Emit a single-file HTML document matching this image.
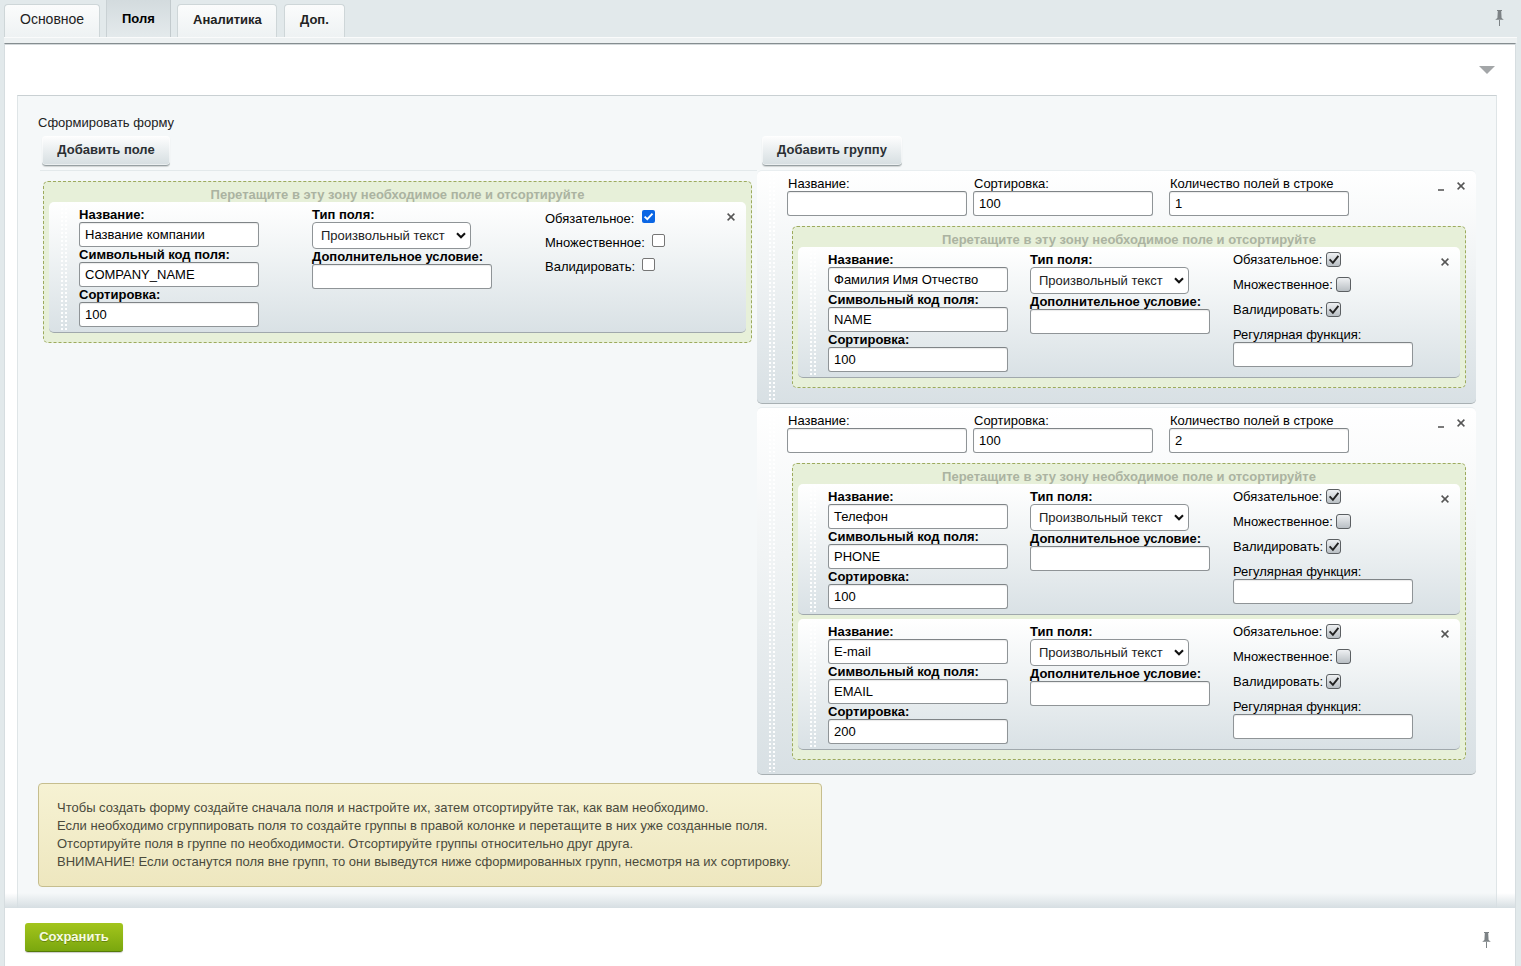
<!DOCTYPE html><html><head><meta charset="utf-8"><style>
*{margin:0;padding:0}
html,body{width:1521px;height:966px;overflow:hidden}
body{position:relative;background:#e2e9eb;font-family:"Liberation Sans",sans-serif;font-size:13px;color:#000}
.abs{position:absolute}
.t{position:absolute;white-space:nowrap;line-height:15px}
.inp{position:absolute;box-sizing:border-box;border:1px solid #8f9497;border-top-color:#7f8487;border-radius:3px;background:#fff;padding-left:5px;line-height:23px;white-space:nowrap;box-shadow:inset 0 1px 1px rgba(0,0,0,.08)}
.sel{position:absolute;box-sizing:border-box;height:27px;border:1px solid #8f9497;border-radius:4px;background:#fff;padding-left:8px;line-height:25px;white-space:nowrap;color:#222}
.card{position:absolute;box-sizing:border-box;border-radius:5px;background:linear-gradient(#fff,#f2f5f6 35%,#d9e1e5);border-bottom:1px solid #a0a8ac}
.gcard{position:absolute;box-sizing:border-box;border-radius:5px;background:linear-gradient(#fff,#f1f4f5 40%,#d8e0e4);border-bottom:1px solid #a8b0b3;border-top:1px solid #e9eef0}
.handle{position:absolute;width:6px;background-image:radial-gradient(circle at 1px 1px,rgba(255,255,255,.95) 1px,transparent 1.2px);background-size:4px 4px}
.dz{position:absolute;box-sizing:border-box;border:1px dashed #9daa5e;border-radius:5px;background:#e7f0d9}
.dzt{position:absolute;text-align:center;font-weight:bold;color:#abb3a1;line-height:15px;white-space:nowrap}
.cbx{width:15px;height:15px;box-sizing:border-box;border:1px solid #5b5f62;border-radius:3px;background:linear-gradient(#eef0f2,#b9bfc4)}
.btn{position:absolute;box-sizing:border-box;height:30px;border-radius:4px;background:linear-gradient(#fefefe,#e7ecee 55%,#d6dee1);border-bottom:1px solid #97a0a3;box-shadow:0 1px 1px rgba(0,0,0,.15),inset 0 0 0 1px rgba(255,255,255,.5);font-weight:bold;text-align:center;line-height:28px;color:#2a2f33}
.tab{position:absolute;top:4px;height:33px;box-sizing:border-box;border:1px solid #ced6d8;border-bottom:none;border-radius:4px 4px 0 0;background:linear-gradient(#fbfcfc,#eef2f3);font-weight:bold;color:#222}
</style></head><body>
<div class="tab" style="left:4px;width:96px;font-weight:normal"><div class="t" style="left:15px;top:6px;font-size:14px;line-height:16px">Основное</div></div>
<div class="abs" style="left:106px;top:0;width:65px;height:37px;box-sizing:border-box;border-left:1px solid #c9d1d4;border-right:1px solid #c2cacd;background:linear-gradient(#d3dbde,#e4eaec)"><div class="t" style="left:15px;top:11px;font-weight:bold">Поля</div></div>
<div class="tab" style="left:177px;width:100px"><div class="t" style="left:15px;top:7px">Аналитика</div></div>
<div class="tab" style="left:284px;width:61px"><div class="t" style="left:15px;top:7px">Доп.</div></div>
<svg class="abs" style="left:1494px;top:9px" width="11" height="18" viewBox="0 0 11 18"><path d="M3 1 H8 V2 H7.2 L7.6 9 L9.8 10.8 H1.2 L3.4 9 L3.8 2 H3 Z" fill="#7c8285"/><path d="M5.5 10.8 V17" stroke="#7c8285" stroke-width="1"/></svg>
<div class="abs" style="left:4px;top:37px;width:1513px;height:6px;background:#edf1f2;border-top:1px solid #fafbfb;box-sizing:border-box"></div>
<div class="abs" style="left:4px;top:43px;width:1512px;height:923px;background:#fff;box-sizing:border-box;border-left:1px solid #d6dde0;border-right:1px solid #d6dde0;border-top:1px solid #858d90"></div>
<div class="abs" style="left:5px;top:44px;width:1510px;height:1px;background:#d3d8da"></div>
<svg class="abs" style="left:1479px;top:66px" width="16" height="8" viewBox="0 0 16 8"><path d="M0 0 H16 L8 8 Z" fill="#a3a6a8"/></svg>
<div class="abs" style="left:17px;top:95px;width:1480px;height:813px;box-sizing:border-box;background:#f5f8f9;border-top:1px solid #c9d0d3;border-left:1px solid #dfe5e7;border-right:1px solid #dfe5e7"></div>
<div class="abs" style="left:5px;top:893px;width:1510px;height:15px;background:linear-gradient(rgba(218,226,229,0),rgba(214,222,226,1))"></div>
<div class="t" style="left:38px;top:115px;color:#222;">Сформировать форму</div>
<div class="btn" style="left:42px;top:136px;width:128px">Добавить поле</div>
<div class="btn" style="left:762px;top:136px;width:140px">Добавить группу</div>
<div class="abs" style="left:40px;top:170px;width:717px;height:1px;background:#e3e9eb"></div>
<div class="dz" style="left:43px;top:181px;width:709px;height:162px"></div>
<div class="dzt" style="left:43px;top:187px;width:709px">Перетащите в эту зону необходимое поле и отсортируйте</div>
<div class="card" style="left:49px;top:202px;width:697px;height:131px"></div>
<div class="handle" style="left:61px;top:204px;height:127px"></div>
<div class="t" style="left:79px;top:207px;font-weight:bold;">Название:</div>
<div class="inp" style="left:79px;top:222px;width:180px;height:25px">Название компании</div>
<div class="t" style="left:79px;top:247px;font-weight:bold;">Символьный код поля:</div>
<div class="inp" style="left:79px;top:262px;width:180px;height:25px">COMPANY_NAME</div>
<div class="t" style="left:79px;top:287px;font-weight:bold;">Сортировка:</div>
<div class="inp" style="left:79px;top:302px;width:180px;height:25px">100</div>
<div class="t" style="left:312px;top:207px;font-weight:bold;">Тип поля:</div>
<div class="sel" style="left:312px;top:222px;width:159px">Произвольный текст<svg width="10" height="7" viewBox="0 0 10 7" style="position:absolute;right:4px;top:9px"><path d="M1 1.2 L5 5.2 L9 1.2" fill="none" stroke="#111" stroke-width="2.1"/></svg></div>
<div class="t" style="left:312px;top:249px;font-weight:bold;">Дополнительное условие:</div>
<div class="inp" style="left:312px;top:264px;width:180px;height:25px"></div>
<div class="t" style="left:545px;top:211px;">Обязательное:</div>
<div class="abs" style="left:642px;top:210px;width:13px;height:13px;border-radius:2px;background:#0b66e4"><svg width="13" height="13" viewBox="0 0 13 13" style="position:absolute;left:0;top:0"><path d="M2.6 6.6 L5.3 9.2 L10.5 3.6" fill="none" stroke="#fff" stroke-width="1.9"/></svg></div>
<div class="t" style="left:545px;top:235px;">Множественное:</div>
<div class="abs" style="left:652px;top:234px;width:13px;height:13px;box-sizing:border-box;border:1px solid #767676;border-radius:2px;background:#fff"></div>
<div class="t" style="left:545px;top:259px;">Валидировать:</div>
<div class="abs" style="left:642px;top:258px;width:13px;height:13px;box-sizing:border-box;border:1px solid #767676;border-radius:2px;background:#fff"></div>
<svg class="abs" style="left:727px;top:213px" width="8" height="8" viewBox="0 0 8 8"><path d="M0.6 0.6 L7.4 7.4 M7.4 0.6 L0.6 7.4" stroke="#555" stroke-width="1.5"/></svg>
<div class="gcard" style="left:757px;top:170px;width:719px;height:234px"></div>
<div class="handle" style="left:769px;top:174px;height:227px"></div>
<div class="t" style="left:788px;top:176px;">Название:</div>
<div class="inp" style="left:787px;top:191px;width:180px;height:25px"></div>
<div class="t" style="left:974px;top:176px;">Сортировка:</div>
<div class="inp" style="left:973px;top:191px;width:180px;height:25px">100</div>
<div class="t" style="left:1170px;top:176px;">Количество полей в строке</div>
<div class="inp" style="left:1169px;top:191px;width:180px;height:25px">1</div>
<div class="abs" style="left:1438px;top:189px;width:6px;height:2px;background:#7a7a7a"></div>
<svg class="abs" style="left:1457px;top:182px" width="8" height="8" viewBox="0 0 8 8"><path d="M0.6 0.6 L7.4 7.4 M7.4 0.6 L0.6 7.4" stroke="#555" stroke-width="1.5"/></svg>
<div class="dz" style="left:792px;top:226px;width:674px;height:162px"></div>
<div class="dzt" style="left:792px;top:232px;width:674px">Перетащите в эту зону необходимое поле и отсортируйте</div>
<div class="card" style="left:798px;top:247px;width:662px;height:131px"></div>
<div class="handle" style="left:810px;top:249px;height:127px"></div>
<div class="t" style="left:828px;top:252px;font-weight:bold;">Название:</div>
<div class="inp" style="left:828px;top:267px;width:180px;height:25px">Фамилия Имя Отчество</div>
<div class="t" style="left:828px;top:292px;font-weight:bold;">Символьный код поля:</div>
<div class="inp" style="left:828px;top:307px;width:180px;height:25px">NAME</div>
<div class="t" style="left:828px;top:332px;font-weight:bold;">Сортировка:</div>
<div class="inp" style="left:828px;top:347px;width:180px;height:25px">100</div>
<div class="t" style="left:1030px;top:252px;font-weight:bold;">Тип поля:</div>
<div class="sel" style="left:1030px;top:267px;width:159px">Произвольный текст<svg width="10" height="7" viewBox="0 0 10 7" style="position:absolute;right:4px;top:9px"><path d="M1 1.2 L5 5.2 L9 1.2" fill="none" stroke="#111" stroke-width="2.1"/></svg></div>
<div class="t" style="left:1030px;top:294px;font-weight:bold;">Дополнительное условие:</div>
<div class="inp" style="left:1030px;top:309px;width:180px;height:25px"></div>
<div class="t" style="left:1233px;top:252px;">Обязательное:</div>
<div class="abs cbx" style="left:1326px;top:252px"><svg width="15" height="15" viewBox="0 0 15 15" style="position:absolute;left:-1px;top:-1px"><path d="M3.6 7.4 L6.9 10.8 L12.4 3.8" fill="none" stroke="#222" stroke-width="1.9"/></svg></div>
<div class="t" style="left:1233px;top:277px;">Множественное:</div>
<div class="abs cbx" style="left:1336px;top:277px"></div>
<div class="t" style="left:1233px;top:302px;">Валидировать:</div>
<div class="abs cbx" style="left:1326px;top:302px"><svg width="15" height="15" viewBox="0 0 15 15" style="position:absolute;left:-1px;top:-1px"><path d="M3.6 7.4 L6.9 10.8 L12.4 3.8" fill="none" stroke="#222" stroke-width="1.9"/></svg></div>
<div class="t" style="left:1233px;top:327px;">Регулярная функция:</div>
<div class="inp" style="left:1233px;top:342px;width:180px;height:25px"></div>
<svg class="abs" style="left:1441px;top:258px" width="8" height="8" viewBox="0 0 8 8"><path d="M0.6 0.6 L7.4 7.4 M7.4 0.6 L0.6 7.4" stroke="#555" stroke-width="1.5"/></svg>
<div class="gcard" style="left:757px;top:407px;width:719px;height:368px"></div>
<div class="handle" style="left:769px;top:411px;height:361px"></div>
<div class="t" style="left:788px;top:413px;">Название:</div>
<div class="inp" style="left:787px;top:428px;width:180px;height:25px"></div>
<div class="t" style="left:974px;top:413px;">Сортировка:</div>
<div class="inp" style="left:973px;top:428px;width:180px;height:25px">100</div>
<div class="t" style="left:1170px;top:413px;">Количество полей в строке</div>
<div class="inp" style="left:1169px;top:428px;width:180px;height:25px">2</div>
<div class="abs" style="left:1438px;top:426px;width:6px;height:2px;background:#7a7a7a"></div>
<svg class="abs" style="left:1457px;top:419px" width="8" height="8" viewBox="0 0 8 8"><path d="M0.6 0.6 L7.4 7.4 M7.4 0.6 L0.6 7.4" stroke="#555" stroke-width="1.5"/></svg>
<div class="dz" style="left:792px;top:463px;width:674px;height:297px"></div>
<div class="dzt" style="left:792px;top:469px;width:674px">Перетащите в эту зону необходимое поле и отсортируйте</div>
<div class="card" style="left:798px;top:484px;width:662px;height:131px"></div>
<div class="handle" style="left:810px;top:486px;height:127px"></div>
<div class="t" style="left:828px;top:489px;font-weight:bold;">Название:</div>
<div class="inp" style="left:828px;top:504px;width:180px;height:25px">Телефон</div>
<div class="t" style="left:828px;top:529px;font-weight:bold;">Символьный код поля:</div>
<div class="inp" style="left:828px;top:544px;width:180px;height:25px">PHONE</div>
<div class="t" style="left:828px;top:569px;font-weight:bold;">Сортировка:</div>
<div class="inp" style="left:828px;top:584px;width:180px;height:25px">100</div>
<div class="t" style="left:1030px;top:489px;font-weight:bold;">Тип поля:</div>
<div class="sel" style="left:1030px;top:504px;width:159px">Произвольный текст<svg width="10" height="7" viewBox="0 0 10 7" style="position:absolute;right:4px;top:9px"><path d="M1 1.2 L5 5.2 L9 1.2" fill="none" stroke="#111" stroke-width="2.1"/></svg></div>
<div class="t" style="left:1030px;top:531px;font-weight:bold;">Дополнительное условие:</div>
<div class="inp" style="left:1030px;top:546px;width:180px;height:25px"></div>
<div class="t" style="left:1233px;top:489px;">Обязательное:</div>
<div class="abs cbx" style="left:1326px;top:489px"><svg width="15" height="15" viewBox="0 0 15 15" style="position:absolute;left:-1px;top:-1px"><path d="M3.6 7.4 L6.9 10.8 L12.4 3.8" fill="none" stroke="#222" stroke-width="1.9"/></svg></div>
<div class="t" style="left:1233px;top:514px;">Множественное:</div>
<div class="abs cbx" style="left:1336px;top:514px"></div>
<div class="t" style="left:1233px;top:539px;">Валидировать:</div>
<div class="abs cbx" style="left:1326px;top:539px"><svg width="15" height="15" viewBox="0 0 15 15" style="position:absolute;left:-1px;top:-1px"><path d="M3.6 7.4 L6.9 10.8 L12.4 3.8" fill="none" stroke="#222" stroke-width="1.9"/></svg></div>
<div class="t" style="left:1233px;top:564px;">Регулярная функция:</div>
<div class="inp" style="left:1233px;top:579px;width:180px;height:25px"></div>
<svg class="abs" style="left:1441px;top:495px" width="8" height="8" viewBox="0 0 8 8"><path d="M0.6 0.6 L7.4 7.4 M7.4 0.6 L0.6 7.4" stroke="#555" stroke-width="1.5"/></svg>
<div class="card" style="left:798px;top:619px;width:662px;height:131px"></div>
<div class="handle" style="left:810px;top:621px;height:127px"></div>
<div class="t" style="left:828px;top:624px;font-weight:bold;">Название:</div>
<div class="inp" style="left:828px;top:639px;width:180px;height:25px">E-mail</div>
<div class="t" style="left:828px;top:664px;font-weight:bold;">Символьный код поля:</div>
<div class="inp" style="left:828px;top:679px;width:180px;height:25px">EMAIL</div>
<div class="t" style="left:828px;top:704px;font-weight:bold;">Сортировка:</div>
<div class="inp" style="left:828px;top:719px;width:180px;height:25px">200</div>
<div class="t" style="left:1030px;top:624px;font-weight:bold;">Тип поля:</div>
<div class="sel" style="left:1030px;top:639px;width:159px">Произвольный текст<svg width="10" height="7" viewBox="0 0 10 7" style="position:absolute;right:4px;top:9px"><path d="M1 1.2 L5 5.2 L9 1.2" fill="none" stroke="#111" stroke-width="2.1"/></svg></div>
<div class="t" style="left:1030px;top:666px;font-weight:bold;">Дополнительное условие:</div>
<div class="inp" style="left:1030px;top:681px;width:180px;height:25px"></div>
<div class="t" style="left:1233px;top:624px;">Обязательное:</div>
<div class="abs cbx" style="left:1326px;top:624px"><svg width="15" height="15" viewBox="0 0 15 15" style="position:absolute;left:-1px;top:-1px"><path d="M3.6 7.4 L6.9 10.8 L12.4 3.8" fill="none" stroke="#222" stroke-width="1.9"/></svg></div>
<div class="t" style="left:1233px;top:649px;">Множественное:</div>
<div class="abs cbx" style="left:1336px;top:649px"></div>
<div class="t" style="left:1233px;top:674px;">Валидировать:</div>
<div class="abs cbx" style="left:1326px;top:674px"><svg width="15" height="15" viewBox="0 0 15 15" style="position:absolute;left:-1px;top:-1px"><path d="M3.6 7.4 L6.9 10.8 L12.4 3.8" fill="none" stroke="#222" stroke-width="1.9"/></svg></div>
<div class="t" style="left:1233px;top:699px;">Регулярная функция:</div>
<div class="inp" style="left:1233px;top:714px;width:180px;height:25px"></div>
<svg class="abs" style="left:1441px;top:630px" width="8" height="8" viewBox="0 0 8 8"><path d="M0.6 0.6 L7.4 7.4 M7.4 0.6 L0.6 7.4" stroke="#555" stroke-width="1.5"/></svg>
<div class="abs" style="left:38px;top:783px;width:784px;height:104px;box-sizing:border-box;border:1px solid #c6be8e;border-radius:4px;background:linear-gradient(#f6f2d3,#eee7bf)"></div>
<div class="t" style="left:57px;top:800px;color:#4a4a3c;">Чтобы создать форму создайте сначала поля и настройте их, затем отсортируйте так, как вам необходимо.</div>
<div class="t" style="left:57px;top:818px;color:#4a4a3c;">Если необходимо сгруппировать поля то создайте группы в правой колонке и перетащите в них уже созданные поля.</div>
<div class="t" style="left:57px;top:836px;color:#4a4a3c;">Отсортируйте поля в группе по необходимости. Отсортируйте группы относительно друг друга.</div>
<div class="t" style="left:57px;top:854px;color:#4a4a3c;">ВНИМАНИЕ! Если останутся поля вне групп, то они выведутся ниже сформированных групп, несмотря на их сортировку.</div>
<div class="abs" style="left:25px;top:923px;width:98px;height:29px;box-sizing:border-box;border-radius:3px;background:linear-gradient(#a3c51c,#7aa70e);border-bottom:1px solid #557a08;box-shadow:0 1px 1px rgba(0,0,0,.2);color:#f7fbe0;font-weight:bold;text-align:center;line-height:27px;text-shadow:0 1px 0 rgba(0,0,0,.25)">Сохранить</div>
<svg class="abs" style="left:1481px;top:931px" width="11" height="18" viewBox="0 0 11 18"><path d="M3 1 H8 V2 H7.2 L7.6 9 L9.8 10.8 H1.2 L3.4 9 L3.8 2 H3 Z" fill="#7c8285"/><path d="M5.5 10.8 V17" stroke="#7c8285" stroke-width="1"/></svg>
</body></html>
